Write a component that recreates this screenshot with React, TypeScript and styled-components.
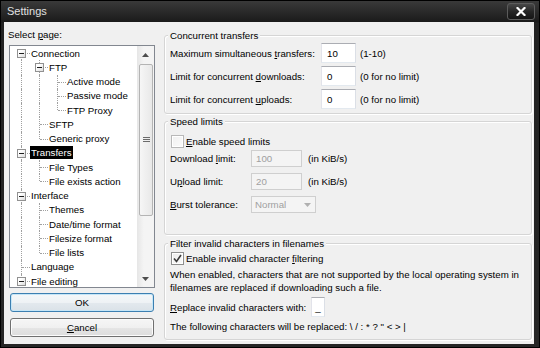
import React from 'react';
import styled, { createGlobalStyle } from 'styled-components';

const Global = createGlobalStyle`
  html, body { margin: 0; padding: 0; background: #000; }
  body { font-family: "Liberation Sans", Arial, sans-serif; font-size: 9.7px; color: #000; }
  * { box-sizing: border-box; }
`;

const Window = styled.div`
  width: 540px;
  height: 348px;
  display: flex;
  flex-direction: column;
  border: 1px solid #000;
  padding: 0 5px 3px 3px;
  background: linear-gradient(to bottom, #3a3a3a 0px, #1a1a1a 21px, #222 22px, #262626 100%);
  overflow: hidden;
`;

const TitleBar = styled.div`
  height: 21px;
  flex: none;
  display: flex;
  align-items: flex-start;
  justify-content: space-between;
`;

const TitleText = styled.span`
  font-family: "Liberation Sans", Arial, sans-serif;
  font-size: 11px;
  line-height: 21px;
  color: #e0e0e0;
  padding-left: 3px;
`;

const CloseBtn = styled.div`
  width: 28px;
  height: 17px;
  margin-top: 2px;
  margin-right: -1px;
  border: 1px solid #5c5c5c;
  border-radius: 3px;
  background: linear-gradient(to bottom, #474747, #262626 50%, #141414);
  display: flex;
  align-items: center;
  justify-content: center;
`;

const Client = styled.div`
  flex: 1;
  display: flex;
  background: #f0f0f0;
  min-height: 0;
  min-width: 0;
`;

const LeftPane = styled.div`
  width: 151px;
  flex: none;
  display: flex;
  flex-direction: column;
  padding: 6px 0 0 5px;
`;

const PaneLabel = styled.div`
  line-height: 13px;
  height: 13px;
  margin-left: -1px;
`;

const U = styled.span`
  text-decoration: underline;
`;

const Tree = styled.div`
  margin-top: 4px;
  width: 146px;
  height: 243px;
  border: 1px solid #828790;
  background: #fff;
  display: flex;
  overflow: hidden;
`;

const TreeList = styled.div`
  flex: 1;
  overflow: hidden;
  padding-left: 2px;
`;

const TreeRow = styled.div`
  height: 14.25px;
  display: flex;
  align-items: center;
`;

type CellKind = 'line' | 'blank' | 'tee' | 'end' | 'first';

const Guide = styled.span<{ $kind: CellKind }>`
  position: relative;
  flex: none;
  width: 18px;
  height: 100%;
  &::before {
    content: '';
    position: absolute;
    left: 9px;
    top: ${(p) => (p.$kind === 'first' ? '50%' : '0')};
    bottom: ${(p) => (p.$kind === 'end' ? '50%' : '0')};
    border-left: 1px dotted #a0a0a0;
    display: ${(p) => (p.$kind === 'blank' ? 'none' : 'block')};
  }
  &::after {
    content: '';
    position: absolute;
    left: 10px;
    width: 8px;
    top: 50%;
    border-top: 1px dotted #a0a0a0;
    display: ${(p) => (p.$kind === 'line' || p.$kind === 'blank' ? 'none' : 'block')};
  }
`;

const Expander = styled.span`
  position: absolute;
  z-index: 1;
  left: 5px;
  top: 50%;
  margin-top: -4px;
  width: 9px;
  height: 9px;
  border: 1px solid #919191;
  background: linear-gradient(135deg, #ffffff 30%, #dcdcdc);
  &::after {
    content: '';
    position: absolute;
    left: 1px;
    right: 1px;
    top: 3px;
    height: 1px;
    background: #1e1e1e;
  }
`;

const NodeLabel = styled.span<{ $sel?: boolean }>`
  padding: 0 1px;
  line-height: 13px;
  white-space: nowrap;
  background: ${(p) => (p.$sel ? '#000' : 'transparent')};
  color: ${(p) => (p.$sel ? '#fff' : '#000')};
`;

const ScrollBar = styled.div`
  width: 17px;
  flex: none;
  display: flex;
  flex-direction: column;
  background: linear-gradient(to right, #e6e6e6, #f4f4f4 40%, #f4f4f4);
`;

const ScrollBtn = styled.div`
  height: 17px;
  flex: none;
  display: flex;
  align-items: center;
  justify-content: center;
`;

const Track = styled.div`
  flex: 1;
  padding-top: 1px;
`;

const Thumb = styled.div`
  margin: 0 1px 0 2px;
  height: 152px;
  border: 1px solid #b4b4b4;
  border-radius: 2px;
  background: linear-gradient(to right, #f6f6f6, #e8e8e8);
  display: flex;
  align-items: center;
  justify-content: center;
`;

const Button = styled.div<{ $default?: boolean }>`
  width: 144px;
  height: 19px;
  margin-left: 1px;
  margin-top: ${(p) => (p.$default ? '5px' : '6px')};
  border: 1px solid ${(p) => (p.$default ? '#3c7fb1' : '#707070')};
  border-radius: 3px;
  background: ${(p) =>
    p.$default
      ? 'linear-gradient(to bottom, #f4f7f9 0%, #eef2f5 50%, #e3e9ee 51%, #dae2e8 100%)'
      : 'linear-gradient(to bottom, #f6f6f6 0%, #f0f0f0 50%, #e5e5e5 51%, #dddddd 100%)'};
  box-shadow: inset 0 0 0 1px ${(p) => (p.$default ? '#c6e6f7' : '#fcfcfc')};
  display: flex;
  align-items: center;
  justify-content: center;
  line-height: 13px;
`;

const RightPane = styled.div`
  flex: 1;
  min-width: 0;
  display: flex;
  flex-direction: column;
  padding: 13px 2px 0 9px;
`;

const Group = styled.div<{ $gap: number; $pb: number }>`
  margin-top: ${(p) => p.$gap}px;
  border: 1px solid #d5d5d5;
  border-radius: 3px;
  box-shadow: inset 1px 1px 0 #fff, 1px 1px 0 #fff;
  padding: 0 0 ${(p) => p.$pb}px 5px;
  display: flex;
  flex-direction: column;
  min-width: 0;
`;

const GroupTitle = styled.div`
  width: fit-content;
  margin: -7px 0 0 -2px;
  padding: 0 2px;
  line-height: 13px;
  height: 13px;
  background: #f0f0f0;
`;

const FieldGrid = styled.div<{ $cols: string; $gap: number; $rowGap: number; $top: number }>`
  display: grid;
  grid-template-columns: ${(p) => p.$cols};
  column-gap: ${(p) => p.$gap}px;
  row-gap: ${(p) => p.$rowGap}px;
  align-items: center;
  margin-top: ${(p) => p.$top}px;
  white-space: nowrap;
`;

const TextBox = styled.div<{ $w: number; $h: number; $pl?: number; $disabled?: boolean }>`
  width: ${(p) => p.$w}px;
  height: ${(p) => p.$h}px;
  border: 1px solid;
  border-color: ${(p) => (p.$disabled ? '#cfcfcf' : '#abadb3 #dbdfe6 #e3e9ef #e2e3ea')};
  background: ${(p) => (p.$disabled ? '#f4f4f4' : '#fff')};
  color: ${(p) => (p.$disabled ? '#a0a0a0' : '#000')};
  padding-left: ${(p) => p.$pl ?? (p.$disabled ? 4 : 5)}px;
  display: flex;
  align-items: center;
  line-height: 13px;
`;

const Select = styled.div`
  width: 65px;
  height: 17px;
  border: 1px solid #cfcfcf;
  background: #f4f4f4;
  color: #a0a0a0;
  padding: 0 4px 0 3px;
  display: flex;
  align-items: center;
  justify-content: space-between;
  line-height: 13px;
`;

const CheckRow = styled.div<{ $top: number }>`
  height: 14px;
  margin-top: ${(p) => p.$top}px;
  display: flex;
  align-items: center;
  gap: 2px;
  padding-left: 1px;
  line-height: 13px;
`;

const CheckBox = styled.span<{ $checked?: boolean }>`
  width: 13px;
  height: 13px;
  flex: none;
  border: 1px solid ${(p) => (p.$checked ? '#8e8f8f' : '#b8b8b8')};
  background: ${(p) =>
    p.$checked ? 'linear-gradient(135deg, #ececec, #fafafa)' : 'linear-gradient(135deg, #f0f0f0, #fbfbfb)'};
  box-shadow: inset 0 0 0 1px #fff;
  display: flex;
  align-items: center;
  justify-content: center;
`;

const Para = styled.div`
  margin-top: 3px;
  line-height: 13px;
  white-space: nowrap;
`;

const Line = styled.div<{ $top: number }>`
  margin-top: ${(p) => p.$top}px;
  line-height: 13px;
  white-space: nowrap;
`;

const ReplaceRow = styled.div`
  margin-top: 3px;
  height: 20px;
  display: flex;
  align-items: center;
  gap: 5px;
  white-space: nowrap;
`;

interface TreeNode {
  label: string;
  cells: CellKind[];
  box?: boolean;
  selected?: boolean;
}

const tree: TreeNode[] = [
  { label: 'Connection', cells: ['first'], box: true },
  { label: 'FTP', cells: ['line', 'tee'], box: true },
  { label: 'Active mode', cells: ['line', 'line', 'tee'] },
  { label: 'Passive mode', cells: ['line', 'line', 'tee'] },
  { label: 'FTP Proxy', cells: ['line', 'line', 'end'] },
  { label: 'SFTP', cells: ['line', 'tee'] },
  { label: 'Generic proxy', cells: ['line', 'end'] },
  { label: 'Transfers', cells: ['tee'], box: true, selected: true },
  { label: 'File Types', cells: ['line', 'tee'] },
  { label: 'File exists action', cells: ['line', 'end'] },
  { label: 'Interface', cells: ['tee'], box: true },
  { label: 'Themes', cells: ['line', 'tee'] },
  { label: 'Date/time format', cells: ['line', 'tee'] },
  { label: 'Filesize format', cells: ['line', 'tee'] },
  { label: 'File lists', cells: ['line', 'end'] },
  { label: 'Language', cells: ['tee'] },
  { label: 'File editing', cells: ['tee'], box: true },
];

const Arrow = ({ down }: { down?: boolean }) => (
  <svg width="7" height="4" viewBox="0 0 7 4">
    <path d={down ? 'M0 0H7L3.5 4Z' : 'M0 4H7L3.5 0Z'} fill="#4d4d4d" />
  </svg>
);

const Check = () => (
  <svg width="9" height="9" viewBox="0 0 9 9">
    <path d="M1 4.5L3.5 7.5L8 1" fill="none" stroke="#3a3a3a" strokeWidth="1.6" />
  </svg>
);

export default function App() {
  return (
    <>
      <Global />
      <Window>
        <TitleBar>
          <TitleText>Settings</TitleText>
          <CloseBtn>
            <svg width="10" height="9" viewBox="0 0 10 9">
              <path d="M1.5 1L8.5 8M8.5 1L1.5 8" stroke="#fff" strokeWidth="2.2" strokeLinecap="square" />
            </svg>
          </CloseBtn>
        </TitleBar>
        <Client>
          <LeftPane>
            <PaneLabel>
              Select <U>p</U>age:
            </PaneLabel>
            <Tree>
              <TreeList>
                {tree.map((n) => (
                  <TreeRow key={n.label}>
                    {n.cells.map((c, i) => (
                      <Guide key={i} $kind={c}>
                        {n.box && i === n.cells.length - 1 && <Expander />}
                      </Guide>
                    ))}
                    <NodeLabel $sel={n.selected}>{n.label}</NodeLabel>
                  </TreeRow>
                ))}
              </TreeList>
              <ScrollBar>
                <ScrollBtn>
                  <Arrow />
                </ScrollBtn>
                <Track>
                  <Thumb>
                    <svg width="7" height="6" viewBox="0 0 7 6">
                      <path d="M0 0.5H7M0 2.5H7M0 4.5H7" stroke="#6b6b6b" strokeWidth="1" />
                    </svg>
                  </Thumb>
                </Track>
                <ScrollBtn>
                  <Arrow down />
                </ScrollBtn>
              </ScrollBar>
            </Tree>
            <Button $default>OK</Button>
            <Button>
              <span>
                <U>C</U>ancel
              </span>
            </Button>
          </LeftPane>
          <RightPane>
            <Group $gap={0} $pb={4}>
              <GroupTitle>Concurrent transfers</GroupTitle>
              <FieldGrid $cols="147px 35px auto" $gap={4} $rowGap={3} $top={1}>
                <span>
                  Maximum simultaneous <U>t</U>ransfers:
                </span>
                <TextBox $w={35} $h={20}>10</TextBox>
                <span>(1-10)</span>
                <span>
                  Limit for concurrent <U>d</U>ownloads:
                </span>
                <TextBox $w={35} $h={20}>0</TextBox>
                <span>(0 for no limit)</span>
                <span>
                  Limit for concurrent <U>u</U>ploads:
                </span>
                <TextBox $w={35} $h={20}>0</TextBox>
                <span>(0 for no limit)</span>
              </FieldGrid>
            </Group>
            <Group $gap={7} $pb={21}>
              <GroupTitle>Speed limits</GroupTitle>
              <CheckRow $top={6}>
                <CheckBox />
                <span>
                  <U>E</U>nable speed limits
                </span>
              </CheckRow>
              <FieldGrid $cols="75px 51px auto" $gap={6} $rowGap={6} $top={2}>
                <span>
                  Download <U>l</U>imit:
                </span>
                <TextBox $w={51} $h={17} $disabled>
                  100
                </TextBox>
                <span>(in KiB/s)</span>
                <span>
                  U<U>p</U>load limit:
                </span>
                <TextBox $w={51} $h={17} $disabled>
                  20
                </TextBox>
                <span>(in KiB/s)</span>
                <span>
                  <U>B</U>urst tolerance:
                </span>
                <Select>
                  <span>Normal</span>
                  <svg width="7" height="4" viewBox="0 0 7 4">
                    <path d="M0 0H7L3.5 4Z" fill="#b0b0b0" />
                  </svg>
                </Select>
                <span />
              </FieldGrid>
            </Group>
            <Group $gap={8} $pb={6}>
              <GroupTitle>Filter invalid characters in filenames</GroupTitle>
              <CheckRow $top={1}>
                <CheckBox $checked>
                  <Check />
                </CheckBox>
                <span>
                  Enable invalid character <U>f</U>iltering
                </span>
              </CheckRow>
              <Para>
                When enabled, characters that are not supported by the local operating system in
                <br />
                filenames are replaced if downloading such a file.
              </Para>
              <ReplaceRow>
                <span>
                  <U>R</U>eplace invalid characters with:
                </span>
                <TextBox $w={14} $h={20} $pl={3}>
                  _
                </TextBox>
              </ReplaceRow>
              <Line $top={3}>{'The following characters will be replaced: \\ / : * ? " < > |'}</Line>
            </Group>
          </RightPane>
        </Client>
      </Window>
    </>
  );
}
